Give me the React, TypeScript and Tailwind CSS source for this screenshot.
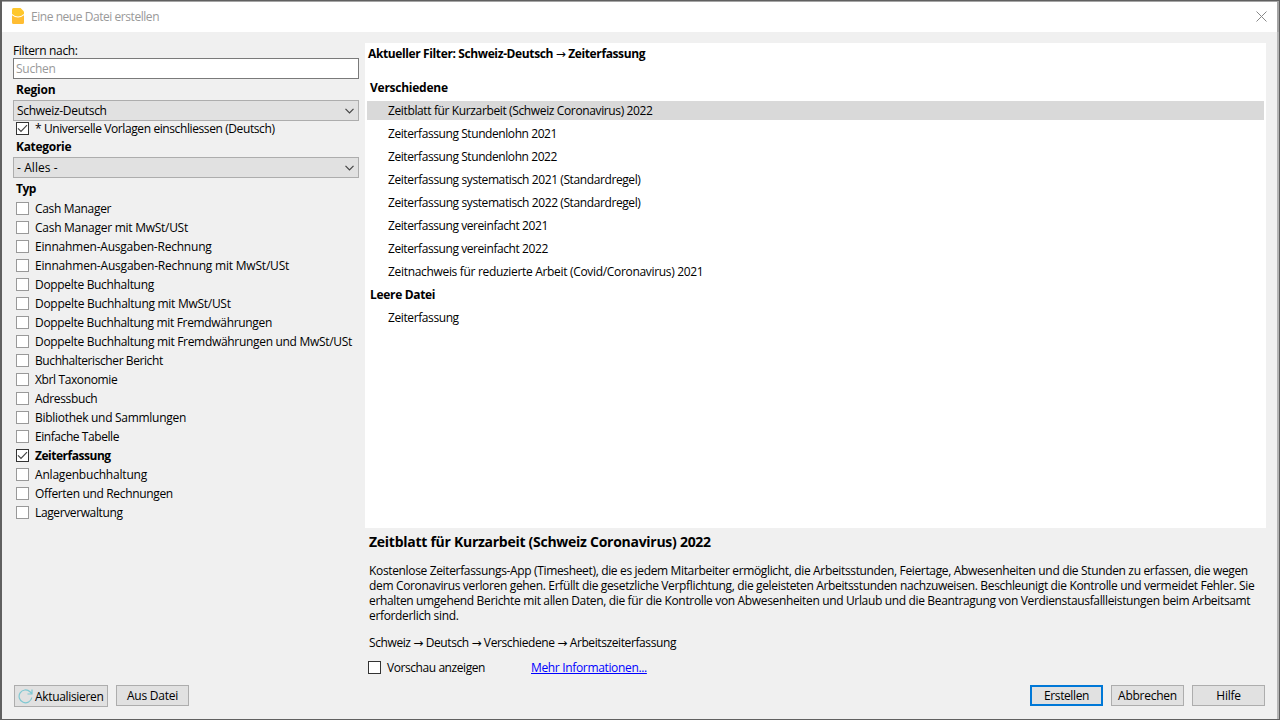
import React from "react";

const types = [
  { label: "Cash Manager", tracking: "tracking-[-0.33px]" },
  { label: "Cash Manager mit MwSt/USt", tracking: "tracking-[-0.27px]" },
  { label: "Einnahmen-Ausgaben-Rechnung", tracking: "tracking-[-0.22px]" },
  { label: "Einnahmen-Ausgaben-Rechnung mit MwSt/USt", tracking: "tracking-[-0.2px]" },
  { label: "Doppelte Buchhaltung", tracking: "tracking-[-0.32px]" },
  { label: "Doppelte Buchhaltung mit MwSt/USt", tracking: "tracking-[-0.28px]" },
  { label: "Doppelte Buchhaltung mit Fremdwährungen", tracking: "tracking-[-0.33px]" },
  { label: "Doppelte Buchhaltung mit Fremdwährungen und MwSt/USt", tracking: "tracking-[-0.31px]" },
  { label: "Buchhalterischer Bericht", tracking: "tracking-[-0.41px]" },
  { label: "Xbrl Taxonomie", tracking: "tracking-[-0.38px]" },
  { label: "Adressbuch", tracking: "tracking-[-0.35px]" },
  { label: "Bibliothek und Sammlungen", tracking: "tracking-[-0.29px]" },
  { label: "Einfache Tabelle", tracking: "tracking-[-0.43px]" },
  { label: "Zeiterfassung", tracking: "tracking-[-0.48px]", checked: true },
  { label: "Anlagenbuchhaltung", tracking: "tracking-[-0.2px]" },
  { label: "Offerten und Rechnungen", tracking: "tracking-[-0.34px]" },
  { label: "Lagerverwaltung", tracking: "tracking-[-0.38px]" },
];

const templates = [
  { label: "Zeitblatt für Kurzarbeit (Schweiz Coronavirus) 2022", tracking: "tracking-[-0.37px]" },
  { label: "Zeiterfassung Stundenlohn 2021", tracking: "tracking-[-0.42px]" },
  { label: "Zeiterfassung Stundenlohn 2022", tracking: "tracking-[-0.42px]" },
  { label: "Zeiterfassung systematisch 2021 (Standardregel)", tracking: "tracking-[-0.4px]" },
  { label: "Zeiterfassung systematisch 2022 (Standardregel)", tracking: "tracking-[-0.4px]" },
  { label: "Zeiterfassung vereinfacht 2021", tracking: "tracking-[-0.42px]" },
  { label: "Zeiterfassung vereinfacht 2022", tracking: "tracking-[-0.42px]" },
  { label: "Zeitnachweis für reduzierte Arbeit (Covid/Coronavirus) 2021", tracking: "tracking-[-0.32px]" },
];

function Box({ checked = false, dark = false }: { checked?: boolean; dark?: boolean }) {
  return (
    <span
      className={`flex h-[13px] w-[13px] shrink-0 border bg-white ${
        checked || dark ? "border-[#333333]" : "border-[#999999]"
      }`}
    >
      {checked && (
        <svg width="11" height="11" viewBox="0 0 11 11" fill="none" stroke="#444" strokeWidth="1.2">
          <path d="M1 5.3 4 8.3 10 2.2" />
        </svg>
      )}
    </span>
  );
}

function Arrow() {
  return <span className="font-['DejaVu_Sans',sans-serif] font-normal leading-none">→</span>;
}

function Select({ value, tracking }: { value: string; tracking: string }) {
  return (
    <div className="flex h-[21px] items-center justify-between border border-[#adadad] bg-[#e1e1e1] pl-[3px] pr-1">
      <span className={tracking}>{value}</span>
      <svg width="9" height="6" viewBox="0 0 9 6" fill="none" stroke="#444" strokeWidth="1.2">
        <path d="M.5 .8 4.5 4.8 8.5 .8" />
      </svg>
    </div>
  );
}

function Button({ children, primary = false }: { children: React.ReactNode; primary?: boolean }) {
  return (
    <button
      className={`flex h-[21px] w-[73px] items-center justify-center bg-[#e1e1e1] ${
        primary ? "border-2 border-[#0078d7] tracking-[-0.4px]" : "border border-[#adadad]"
      }`}
    >
      {children}
    </button>
  );
}

export default function App() {
  return (
    <div className="flex h-[720px] w-[1280px] flex-col overflow-hidden whitespace-nowrap border-y border-l-2 border-r border-[#606060] bg-[#f0f0f0] font-['Open_Sans','Noto_Sans',sans-serif] text-[12px] leading-[15px] tracking-[-0.25px] text-black">
      <header className="flex h-[31px] shrink-0 items-center border-r-2 border-t border-[#a5a5a5] bg-white pb-[2px] pl-[10px] pr-[10px]">
        <svg width="12" height="16" viewBox="0 0 12 16">
          <path d="M0 1.5Q0 0 1.5 0H8.5L12 3.5V6Q9 8.5 6 8.5T0 6Z" fill="#ffc72c" />
          <path d="M0 7.2Q3 9.6 6 9.6T12 7.2V14.5Q12 16 10.5 16H1.5Q0 16 0 14.5Z" fill="#ffbd32" />
        </svg>
        <span className="ml-[7px] tracking-[-0.45px] text-[#999999]">Eine neue Datei erstellen</span>
        <svg className="ml-auto" width="11" height="11" viewBox="0 0 11 11" stroke="#888" strokeWidth="1">
          <path d="M.5 .5 10.5 10.5M10.5 .5 .5 10.5" />
        </svg>
      </header>

      <div className="flex min-h-0 flex-1 border-r-2 border-[#b5b5b5]">
        <aside className="flex w-[357px] shrink-0 flex-col pl-[11px]">
          <label className="mt-[11px] h-[15px] tracking-[-0.33px]">Filtern nach:</label>
          <div className="flex h-[21px] items-center border border-[#7a7a7a] bg-white pl-[2px] text-[#999999]">Suchen</div>
          <h2 className="flex h-[21px] items-center pl-[3px] font-bold">Region</h2>
          <Select value="Schweiz-Deutsch" tracking="tracking-[-0.3px]" />
          <label className="flex h-[15px] items-center gap-[6px] pl-[3px]">
            <Box checked />
            <span className="tracking-[-0.4px]">* Universelle Vorlagen einschliessen (Deutsch)</span>
          </label>
          <h2 className="flex h-[21px] items-center pl-[3px] font-bold tracking-[-0.3px]">Kategorie</h2>
          <Select value="- Alles -" tracking="tracking-[0.08px]" />
          <h2 className="flex h-[21px] items-center pl-[3px] font-bold tracking-[-0.5px]">Typ</h2>
          <div className="flex flex-col">
            {types.map((t) => (
              <label key={t.label} className="flex h-[19px] items-center gap-[6px] pl-[3px]">
                <Box checked={t.checked} />
                <span className={`${t.tracking} ${t.checked ? "font-bold" : ""}`}>{t.label}</span>
              </label>
            ))}
          </div>
          <div className="mb-[12px] ml-px mt-auto flex gap-2">
            <button className="flex h-[22px] w-[94px] items-center border border-[#adadad] bg-[#e1e1e1] pl-[3px]">
              <svg width="15" height="15" viewBox="0 0 15 15" fill="none" stroke="#7fc8d2" strokeWidth="1.2">
                <path d="M13.8 8.5A6.4 6.4 0 1 1 12 2.8L14 4.8M14 .5V5H9.5" />
              </svg>
              <span className="ml-[2px] tracking-[-0.33px]">Aktualisieren</span>
            </button>
            <Button>Aus Datei</Button>
          </div>
        </aside>

        <main className="ml-[6px] flex w-[901px] flex-col">
          <section className="mt-[11px] flex h-[485px] shrink-0 flex-col bg-white px-[2px]">
            <h1 className="mb-[13px] mt-[2px] h-[18px] pl-px font-bold leading-[17px] tracking-[-0.38px]">
              Aktueller Filter: Schweiz-Deutsch <Arrow /> Zeiterfassung
            </h1>
            <h3 className="flex h-[23px] items-center pl-[3px] font-bold">Verschiedene</h3>
            {templates.map((t, i) => (
              <div
                key={t.label}
                className={`my-[2px] flex h-[19px] shrink-0 items-center pl-[21px] ${t.tracking} ${i === 0 ? "bg-[#d9d9d9]" : ""}`}
              >
                {t.label}
              </div>
            ))}
            <h3 className="flex h-[23px] items-center pl-[3px] font-bold tracking-[-0.32px]">Leere Datei</h3>
            <div className="flex h-[23px] items-center pl-[21px] tracking-[-0.4px]">Zeiterfassung</div>
          </section>

          <section className="flex flex-col pl-1">
            <h2 className="mt-[4px] h-[20px] text-[14px] font-bold leading-[19px] tracking-[-0.27px]">
              Zeitblatt für Kurzarbeit (Schweiz Coronavirus) 2022
            </h2>
            <p className="mt-[11px] tracking-[-0.345px]">
              Kostenlose Zeiterfassungs-App (Timesheet), die es jedem Mitarbeiter ermöglicht, die Arbeitsstunden, Feiertage, Abwesenheiten und die Stunden zu erfassen, die wegen
              <br />
              dem Coronavirus verloren gehen. Erfüllt die gesetzliche Verpflichtung, die geleisteten Arbeitsstunden nachzuweisen. Beschleunigt die Kontrolle und vermeidet Fehler. Sie
              <br />
              erhalten umgehend Berichte mit allen Daten, die für die Kontrolle von Abwesenheiten und Urlaub und die Beantragung von Verdienstausfallleistungen beim Arbeitsamt
              <br />
              erforderlich sind.
            </p>
            <p className="mt-[12px] h-[15px] tracking-[-0.4px]">
              Schweiz <Arrow /> Deutsch <Arrow /> Verschiedene <Arrow /> Arbeitszeiterfassung
            </p>
            <div className="-ml-px mt-[10px] flex h-[15px] items-center">
              <label className="flex w-[163px] items-center gap-[6px]">
                <Box dark />
                <span className="tracking-[-0.43px]">Vorschau anzeigen</span>
              </label>
              <a className="tracking-[-0.34px] text-[#0000ff] underline">Mehr Informationen...</a>
            </div>
          </section>

          <footer className="mb-[13px] mr-px mt-auto flex justify-end gap-2">
            <Button primary>Erstellen</Button>
            <Button>Abbrechen</Button>
            <Button>Hilfe</Button>
          </footer>
        </main>
      </div>
    </div>
  );
}
